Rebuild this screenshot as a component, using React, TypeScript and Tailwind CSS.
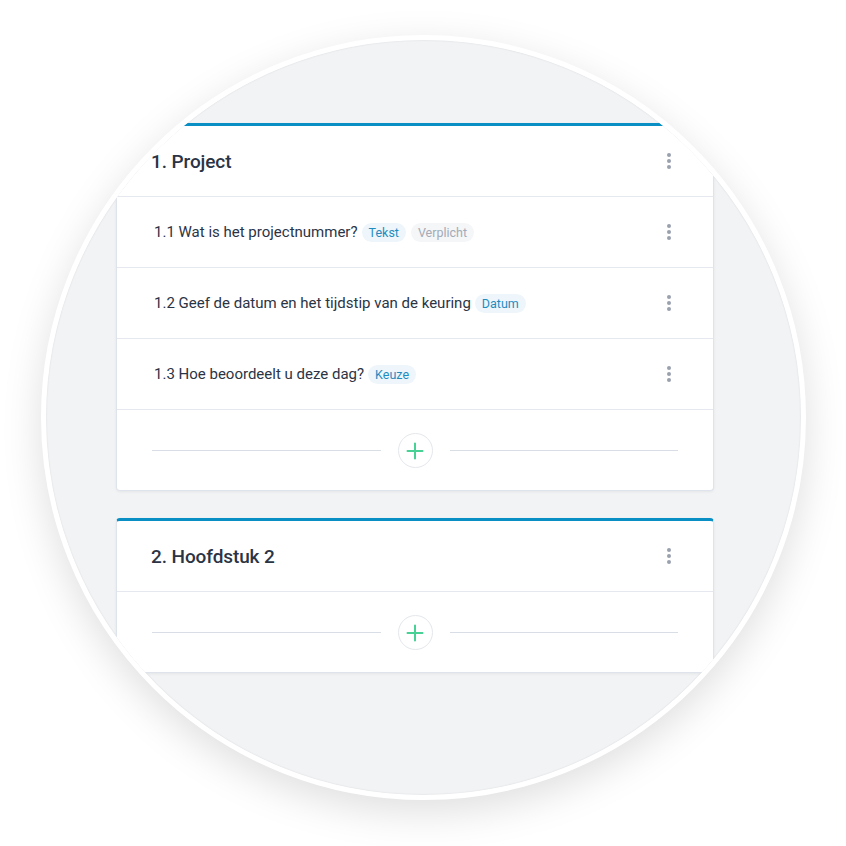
import React from "react";

type Question = { label: string; tags: { text: string; kind: "type" | "muted" }[] };

const chapters: { title: string; questions: Question[] }[] = [
  {
    title: "1. Project",
    questions: [
      {
        label: "1.1 Wat is het projectnummer?",
        tags: [
          { text: "Tekst", kind: "type" },
          { text: "Verplicht", kind: "muted" },
        ],
      },
      { label: "1.2 Geef de datum en het tijdstip van de keuring", tags: [{ text: "Datum", kind: "type" }] },
      { label: "1.3 Hoe beoordeelt u deze dag?", tags: [{ text: "Keuze", kind: "type" }] },
    ],
  },
  { title: "2. Hoofdstuk 2", questions: [] },
];

const Kebab = () => (
  <div className="flex flex-col items-center gap-[2.5px] w-[4px]">
    <span className="w-[3.5px] h-[3.5px] rounded-full bg-[#9aa1ae]" />
    <span className="w-[3.5px] h-[3.5px] rounded-full bg-[#9aa1ae]" />
    <span className="w-[3.5px] h-[3.5px] rounded-full bg-[#9aa1ae]" />
  </div>
);

const AddRow = () => (
  <div className="h-[80px] flex items-center px-[35px] pt-[1px]">
    <div className="flex-1 h-px bg-[#d9dee6]" />
    <button className="mx-[17px] w-[35px] h-[35px] rounded-full border border-[#e4e7ec] bg-white flex items-center justify-center">
      <svg width="18" height="18" viewBox="0 0 18 18">
        <path d="M9 1.5v15M1.5 9h15" stroke="#48d194" strokeWidth="2" strokeLinecap="round" />
      </svg>
    </button>
    <div className="flex-1 h-px bg-[#d9dee6]" />
  </div>
);

const Chapter = ({ title, questions }: { title: string; questions: Question[] }) => (
  <div className="w-[598px] bg-white rounded-[4px] border-t-[3px] border-t-[#0a8fc4] border-x border-b border-x-[#dfe4ec] border-b-[#dfe4ec] shadow-[0_1px_3px_rgba(0,0,0,0.06)]">
    <div className="h-[71px] flex items-center justify-between pl-[34px] pr-[42px] border-b border-[#e5e9ef]">
      <h2 className="text-[19px] font-medium text-[#2b3445] tracking-[-0.1px] pt-[3px]">{title}</h2>
      <Kebab />
    </div>
    {questions.map((q, i) => (
      <div key={i} className="h-[71px] flex items-center justify-between pl-[37px] pr-[42px] border-b border-[#e5e9ef]">
        <div className="flex items-center gap-[5px]">
          <span className="text-[15px] text-[#2b3445] mr-[-1px]">{q.label}</span>
          {q.tags.map((t, j) => (
            <span
              key={j}
              className={`text-[12.5px] leading-[19px] px-[7px] rounded-full ${
                t.kind === "type" ? "bg-[#eef6fb] text-[#1f8bc0]" : "bg-[#f5f6f8] text-[#a3abb6]"
              }`}
            >
              {t.text}
            </span>
          ))}
        </div>
        <Kebab />
      </div>
    ))}
    <AddRow />
  </div>
);

export default function App() {
  return (
    <div className="w-[846px] h-[846px] bg-white overflow-hidden pl-[41px] pt-[35px]" style={{ fontFamily: "Roboto, 'Noto Sans', sans-serif" }}>
      <div className="w-[765px] h-[765px] rounded-full border-[5px] border-white shadow-[0_12px_40px_rgba(0,0,0,0.13)] overflow-hidden bg-[#f2f3f5]">
        <div className="w-full h-full rounded-full overflow-hidden shadow-[inset_0_0_2px_rgba(0,0,0,0.12)]">
          <div className="flex flex-col gap-[27px] pl-[70px] pt-[83px]">
            {chapters.map((c, i) => (
              <Chapter key={i} title={c.title} questions={c.questions} />
            ))}
          </div>
        </div>
      </div>
    </div>
  );
}
